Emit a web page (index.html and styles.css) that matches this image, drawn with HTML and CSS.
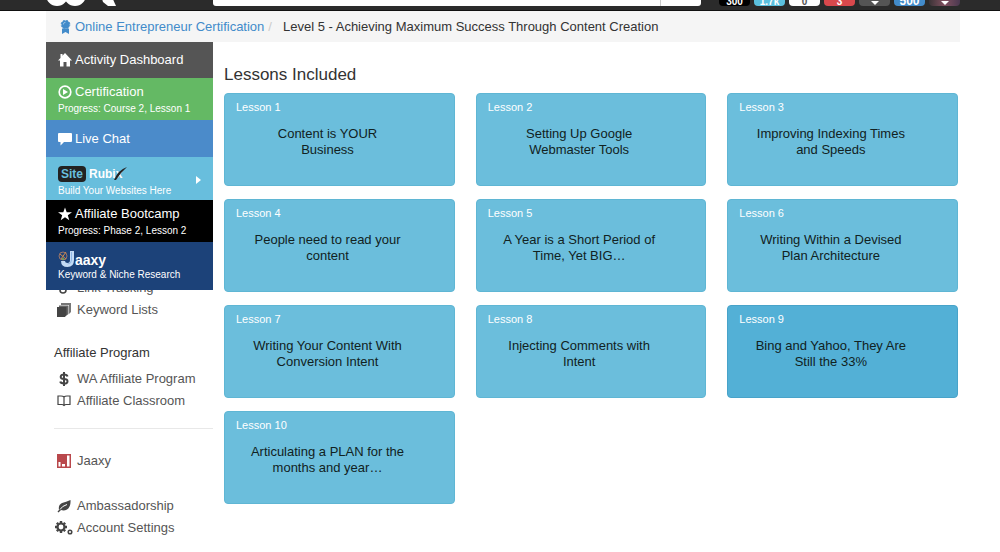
FILE: index.html
```html
<!DOCTYPE html>
<html lang="en">

<head>
    <meta charset="utf-8">
    <title>Level 5 - Achieving Maximum Success Through Content Creation</title>
    <link rel="stylesheet" href="styles.css">
</head>

<body>
    <div class="navbar">
        <a class="brand" href="#" aria-label="Home">
            <svg width="72" height="24" viewBox="0 0 72 24">
                <g fill="none" stroke="#fff" stroke-width="6">
                    <circle cx="11" cy="13" r="8" />
                    <circle cx="29" cy="13" r="8" />
                </g>
                <path d="M52 4h9l9 20h-8l-5-4z" fill="#fff" />
            </svg>
        </a>
        <form class="search">
            <input type="text" aria-label="Search">
            <button type="button" aria-label="Go"></button>
        </form>
        <div class="badges">
            <a class="badge black" href="#">300</a>
            <a class="badge cyan" href="#">1.7k</a>
            <a class="badge white" href="#">0</a>
            <a class="badge red" href="#">3</a>
            <a class="badge gray" href="#" aria-label="More"><svg width="8" height="5" viewBox="0 0 8 5"><path d="M0 0h8L4 4z" fill="#fff" /></svg></a>
            <a class="badge blue" href="#">500</a>
            <a class="badge avatar" href="#" aria-label="Profile"><svg width="8" height="5" viewBox="0 0 8 5"><path d="M0 0h8L4 4z" fill="#fff" /></svg></a>
        </div>
    </div>

    <div class="container">
        <div class="breadcrumb">
            <a href="#">
                <svg width="11" height="14" viewBox="0 0 11 14" fill="#428bca">
                    <circle cx="5.500" cy="4.500" r="4" />
                    <circle cx="5.500" cy="4.500" r="4.300" fill="none" stroke="#428bca" stroke-dasharray="2 1.400" />
                    <path d="M2 8.500h7V14l-3.500-2L2 14z" />
                    <path d="M3.300 4.500a2.200 2.200 0 0 1 2.200-2.200" fill="none" stroke="#9cc4e6" />
                </svg>
                Online Entrepreneur Certification</a>
            <span class="slash">/</span>
            <span class="current">Level 5 - Achieving Maximum Success Through Content Creation</span>
        </div>

        <div class="page">
            <div class="sidebar">
                <div class="menu">
                    <a class="item dashboard" href="#">
                        <span class="title">
                            <svg width="14" height="14" viewBox="0 0 14 14" fill="#fff"><path d="M7 0l7 7.500h-2V13.500H8.500V9h-3v4.500H2V7.500H0L2.500 5V1h2v1.800z" /></svg>
                            Activity Dashboard</span>
                    </a>
                    <a class="item certification" href="#">
                        <span class="title">
                            <svg width="14" height="14" viewBox="0 0 14 14"><circle cx="7" cy="7" r="5.800" fill="none" stroke="#fff" stroke-width="1.700" /><path d="M5 4l5 3-5 3z" fill="#fff" /></svg>
                            Certification</span>
                        <span class="sub">Progress: Course 2, Lesson 1</span>
                    </a>
                    <a class="item chat" href="#">
                        <span class="title">
                            <svg width="14" height="14" viewBox="0 0 14 14" fill="#fff"><path d="M1 1h12q1 0 1 1v7q0 1-1 1H6l-3.500 3.500V10H1q-1 0-1-1V2q0-1 1-1z" /></svg>
                            Live Chat</span>
                    </a>
                    <a class="item rubix" href="#">
                        <span class="rubix-logo">
                            <span class="site">Site</span>
                            <span class="rubi">Rubix</span>
                            <svg class="swoosh" width="14" height="15" viewBox="0 0 14 15"><path d="M1 14Q5 4 14 1 8 6 3 14z" fill="#222" /></svg>
                        </span>
                        <span class="sub">Build Your Websites Here</span>
                        <svg class="caret" width="5" height="8" viewBox="0 0 5 8"><path d="M0 0l5 4-5 4z" fill="#fff" /></svg>
                    </a>
                    <a class="item bootcamp" href="#">
                        <span class="title">
                            <svg width="14" height="14" viewBox="0 0 14 14" fill="#fff"><path d="M7 .5l1.700 4.700H14L9.800 8.300l1.500 5L7 10.300l-4.300 3 1.500-5L0 5.200h5.300z" /></svg>
                            Affiliate Bootcamp</span>
                        <span class="sub">Progress: Phase 2, Lesson 2</span>
                    </a>
                    <a class="item jaaxy" href="#">
                        <span class="jaaxy-logo">
                            <svg width="17" height="17" viewBox="0 0 17 17" fill="none">
                                <circle cx="5" cy="6" r="4" stroke="#9a7468" />
                                <path d="M2 4l6 5M8 2L3 9" stroke="#d08a4a" />
                                <circle cx="5" cy="9" r="1" fill="#6fb55c" />
                                <path d="M14 1v9q0 5-4.500 5T5 11" stroke="#c3dbf5" stroke-width="4" />
                                <path d="M13.500 2v8q0 4-4 4" stroke="#8fb7e6" />
                            </svg>
                            <span>aaxy</span>
                        </span>
                        <span class="sub">Keyword &amp; Niche Research</span>
                    </a>
                </div>

                <div class="links">
                    <a href="#">
                        <svg width="14" height="14" viewBox="0 0 14 14" fill="none" stroke="#444" stroke-width="1.600"><circle cx="6" cy="9" r="3" /><path d="M8 7l4-4" /></svg>
                        Link Tracking</a>
                    <a href="#">
                        <svg width="14" height="14" viewBox="0 0 14 14"><path d="M4 0h10v9l-2 2H4z" fill="#777" /><path d="M2 2h10v9l-2 1.500H2z" fill="#fff" /><path d="M2 2.500h9.500V11l-2 1.500H2z" fill="#666" /><path d="M0 4h9.500v8L8 14H0z" fill="#444" /></svg>
                        Keyword Lists</a>
                    <h4>Affiliate Program</h4>
                    <a href="#">
                        <svg width="14" height="14" viewBox="0 0 14 14" fill="none" stroke="#444" stroke-width="2"><path d="M10.500 4.500Q10 2.500 7 2.500T3.700 4.700 7 7t3.500 2.400T7 11.500 3.300 9.500M7 0v14" /></svg>
                        WA Affiliate Program</a>
                    <a href="#">
                        <svg width="14" height="14" viewBox="0 0 14 14" fill="none" stroke="#444" stroke-width="1.200"><path d="M7 3Q6 2 4 2H1v8.500h4q1 0 2 1 1-1 2-1h4V2h-3Q8 2 7 3v8" /></svg>
                        Affiliate Classroom</a>
                    <hr>
                    <a href="#">
                        <svg width="14" height="14" viewBox="0 0 14 14"><path d="M0 0h14v14H0z" fill="#b9484c" /><path d="M1.500 8h2v4.500h-2zM5 10h3v2.500H5zM10 1.500h2.500v11H10z" fill="#fff" /></svg>
                        Jaaxy</a>
                    <a class="spaced" href="#">
                        <svg width="14" height="14" viewBox="0 0 14 14"><path d="M13.500 1Q14 8 10 10.500 7 12 4 11l-2.500 2.500-1-1L2 11Q1 6 5 4q4-1 8.500-3z" fill="#444" /><path d="M3 10.500Q5 7 10 5.500" fill="none" stroke="#fff" /></svg>
                        Ambassadorship</a>
                    <a href="#">
                        <svg class="gears" width="18" height="14" viewBox="0 0 18 14" fill="none" stroke="#444"><circle cx="6" cy="6" r="3.500" stroke-width="2.200" /><path d="M6 0v2M6 10v2M0 6h2M10 6h2M1.800 1.800l1.400 1.400M8.800 8.800l1.400 1.400M1.800 10.200l1.400-1.400M8.800 3.200l1.400-1.400" stroke-width="2.400" /><circle cx="15" cy="11" r="1.800" stroke-width="1.500" /></svg>
                        Account Settings</a>
                </div>
            </div>

            <div class="content">
                <h3>Lessons Included</h3>
                <div class="lessons">
                    <a class="lesson" href="#"><span class="number">Lesson 1</span><span class="name">Content is YOUR Business</span></a>
                    <a class="lesson" href="#"><span class="number">Lesson 2</span><span class="name">Setting Up Google Webmaster Tools</span></a>
                    <a class="lesson" href="#"><span class="number">Lesson 3</span><span class="name">Improving Indexing Times and Speeds</span></a>
                    <a class="lesson" href="#"><span class="number">Lesson 4</span><span class="name">People need to read your content</span></a>
                    <a class="lesson" href="#"><span class="number">Lesson 5</span><span class="name">A Year is a Short Period of Time, Yet BIG…</span></a>
                    <a class="lesson" href="#"><span class="number">Lesson 6</span><span class="name">Writing Within a Devised Plan Architecture</span></a>
                    <a class="lesson" href="#"><span class="number">Lesson 7</span><span class="name">Writing Your Content With Conversion Intent</span></a>
                    <a class="lesson" href="#"><span class="number">Lesson 8</span><span class="name">Injecting Comments with Intent</span></a>
                    <a class="lesson active" href="#"><span class="number">Lesson 9</span><span class="name">Bing and Yahoo, They Are Still the 33%</span></a>
                    <a class="lesson" href="#"><span class="number">Lesson 10</span><span class="name">Articulating a PLAN for the months and year…</span></a>
                </div>
            </div>
        </div>
    </div>
</body>

</html>
```

FILE: styles.css
```css
* {
    box-sizing: border-box;
}

body {
    font-family: "Liberation Sans", Arial, sans-serif;
    font-size: 13px;
    color: #333;
    margin: 0;
    background-color: #fff;
}

a {
    text-decoration: none;
}

svg {
    flex: none;
}

/* top bar, only its lower edge shows */
.navbar {
    display: flex;
    align-items: flex-end;
    height: 11px;
    padding: 0 40px 4px 46px;
    background-color: #2b2b2b;
    border-bottom: 1px solid #111;
    overflow: hidden;
}

.brand {
    width: 167px;
    height: 24px;
}

.search {
    display: flex;
    flex: 1;
}

.search input {
    flex: 1;
    min-width: 0;
    height: 26px;
    border: 0;
    border-radius: 3px 0 0 3px;
    background-color: #fff;
}

.search button {
    width: 41px;
    height: 26px;
    border: 0;
    border-left: 1px solid #ccc;
    border-radius: 0 3px 3px 0;
    background-color: #fff;
}

.badges {
    display: flex;
    gap: 4px;
    margin-left: 18px;
}

.badge {
    display: flex;
    align-items: flex-end;
    justify-content: center;
    width: 31px;
    height: 26px;
    border-radius: 4px;
    font-size: 10px;
    line-height: 9px;
    font-weight: bold;
    color: #fff;
}

.black { background-color: #000; }
.cyan { background-color: #5bc0de; }
.white { background-color: #fff; color: #555; }
.red { background-color: #d9484c; }
.gray { background-color: #555; }
.blue { background-color: #428bca; font-size: 12px; }
.avatar { background: linear-gradient(90deg, #3a3336, #80505f, #4a3850); }

.container {
    padding: 0 40px 0 46px;
}

.breadcrumb {
    display: flex;
    align-items: center;
    height: 31px;
    padding-left: 14px;
    background-color: #f5f5f5;
}

.breadcrumb a {
    display: flex;
    align-items: center;
    gap: 4px;
    color: #428bca;
}

.slash {
    margin: 0 11px 0 4px;
    color: #ccc;
}

.page {
    display: flex;
}

.sidebar {
    flex: none;
    width: 167px;
}

/* coloured menu lies over the link list */
.menu {
    position: relative;
    z-index: 1;
}

.item {
    display: block;
    position: relative;
    padding: 5px 12px 3px;
    color: #fff;
}

.title {
    display: flex;
    align-items: center;
    gap: 3px;
    line-height: 18px;
}

.sub {
    display: block;
    font-size: 10px;
    line-height: 16px;
}

.dashboard {
    padding: 9px 12px;
    background-color: #555;
}

.certification {
    background-color: #64b964;
}

.chat {
    padding: 10px 12px 9px;
    background-color: #4b8bca;
}

.rubix {
    padding: 7px 12px 1px;
    background-color: #68bedd;
}

.bootcamp {
    background-color: #000;
}

.jaaxy {
    padding: 7px 12px;
    background-color: #1c4279;
}

.rubix-logo {
    display: flex;
    align-items: center;
    gap: 3px;
    position: relative;
    height: 19px;
    font-size: 12px;
    font-weight: bold;
}

.site {
    padding: 0 3px;
    border-radius: 4px;
    line-height: 16px;
    color: #68bedd;
    background-color: #222;
}

.swoosh {
    position: absolute;
    left: 55px;
    top: 2px;
}

.caret {
    position: absolute;
    right: 12px;
    top: 19px;
}

.jaaxy-logo {
    display: flex;
    align-items: center;
    height: 18px;
    font-size: 14px;
    font-weight: bold;
}

.jaaxy-logo span {
    padding-top: 3px;
}

.links {
    margin-top: -13px;
    padding-left: 8px;
}

.links a {
    display: flex;
    align-items: center;
    gap: 6px;
    padding-left: 3px;
    line-height: 22px;
    color: #555;
}

.links h4 {
    margin: 21px 0 4px;
    font-size: 13px;
    line-height: 22px;
    font-weight: normal;
    color: #333;
}

.links hr {
    margin: 16px 0 21px;
    border: 0;
    border-top: 1px solid #e8e8e8;
}

.links .spaced {
    margin-top: 23px;
}

.gears {
    margin: 0 -2px;
}

.content {
    flex: 1;
    padding: 22px 2px 0 11px;
}

.content h3 {
    margin: 0 0 7px;
    font-size: 17px;
    line-height: 22px;
    font-weight: normal;
}

.lessons {
    display: grid;
    grid-template-columns: repeat(3, 1fr);
    gap: 13px 21px;
}

.lesson {
    display: block;
    min-height: 93px;
    padding: 5px 11px;
    border: 1px solid #5fb6d4;
    border-radius: 4px;
    background-color: #6bbedc;
}

.lesson.active {
    background-color: #53b0d6;
    border-color: #48a3c9;
}

.number {
    display: block;
    font-size: 11px;
    line-height: 16px;
    color: #fff;
}

.name {
    display: block;
    width: 155px;
    margin: 11px 0 0 14px;
    line-height: 16px;
    text-align: center;
    color: #122;
}
```
